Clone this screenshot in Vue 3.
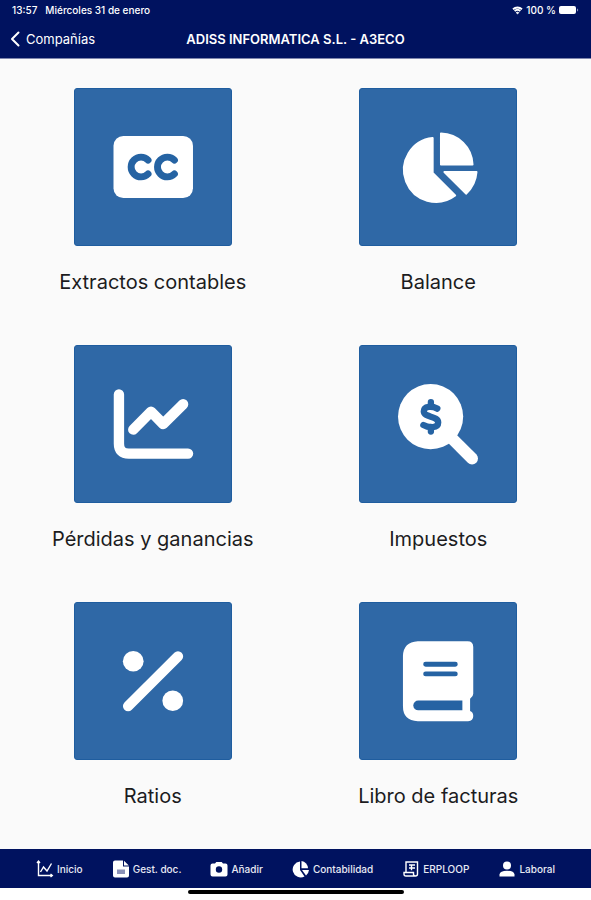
<template>
  <div class="app-screen">
    <header class="app-header">
      <div class="status-bar">
        <div class="status-group">
          <span>13:57</span>
          <span>Miércoles 31 de enero</span>
        </div>
        <div class="status-group status-right">
          <svg class="wifi" viewBox="0 0 12 10" aria-hidden="true">
            <path d="M1 3.6C3.8 1 8.2 1 11 3.6" />
            <path d="M2.8 5.6C4.6 4 7.4 4 9.2 5.6" />
            <path d="M4.6 7.4C5.4 6.7 6.6 6.7 7.4 7.4L6 8.8Z" class="solid" />
          </svg>
          <span>100 %</span>
          <svg class="battery" viewBox="0 0 20 8" aria-hidden="true">
            <rect x="0" y="0" width="17" height="8" rx="2" />
            <path d="M18 2.5C19.6 3 19.6 5 18 5.5Z" class="tip" />
          </svg>
        </div>
      </div>

      <div class="title-bar">
        <button class="back-btn" type="button">
          <svg class="back-icon" viewBox="0 0 10 16" aria-hidden="true">
            <path d="M8.5 1.5L2 8L8.5 14.5" />
          </svg>
          <span>Compañías</span>
        </button>
        <h1 class="title">ADISS INFORMATICA S.L. - A3ECO</h1>
      </div>
    </header>

    <main class="menu-grid">
      <button v-for="item in items" :key="item.icon" class="menu-item" type="button">
        <span class="tile">
          <svg viewBox="0 0 158 158" aria-hidden="true">
            <g v-if="item.icon === 'captions'">
              <rect class="solid" x="39" y="47.5" width="80.5" height="63" rx="10" />
              <path class="cut-line" stroke-width="7" d="M74 72A10 10 0 1 0 74 86" />
              <path class="cut-line" stroke-width="7" d="M100.7 72A10 10 0 1 0 100.7 86" />
            </g>
            <g v-else-if="item.icon === 'pie'" class="solid soft">
              <path d="M73.6 49.7V85L96.4 107.8A32.4 32.4 0 1 1 73.6 49.7Z" />
              <path d="M82 45A32.5 32.5 0 0 1 114 76.4H82Z" />
              <path d="M85.5 84H118A33 33 0 0 1 107.4 106Z" />
            </g>
            <g v-else-if="item.icon === 'chart'" class="line" stroke-width="10.5">
              <path d="M44.5 49V99Q44.5 109 54.5 109H114.5" />
              <path d="M59 84.7L77 66.5L89.3 79L109.5 59" />
            </g>
            <g v-else-if="item.icon === 'search'">
              <path class="line" stroke-width="12" d="M88 88.5L113.5 114" />
              <circle class="solid" cx="71.5" cy="71.5" r="33" />
              <g class="cut-line" stroke-width="6.4">
                <path d="M78.3 63.4C73 60.6 64.6 60.6 64.6 66.2C64.6 72.6 79.2 70.6 79.2 77.4C79.2 83.4 69.5 83 64.2 80" />
                <path d="M71.8 57V61M71.8 82V86.6" />
              </g>
            </g>
            <g v-else-if="item.icon === 'percent'">
              <circle class="solid" cx="59" cy="59" r="10.5" />
              <circle class="solid" cx="99" cy="99" r="10.5" />
              <path class="line" stroke-width="10.5" d="M104.3 54L53.8 104.4" />
            </g>
            <g v-else>
              <path
                class="solid"
                d="M58.5 38.7H109Q114.7 38.7 114.7 44.5V92Q114.7 95 111.5 97V109.5Q114.7 110.5 114.7 114.5Q114.7 119.7 109.5 119.7H58.5Q43.5 119 43.5 104.5V53.5Q44 39.5 58.5 38.7Z"
              />
              <path class="cut-line" stroke-width="5" d="M66.5 62H96.5M66.5 71.8H96.5" />
              <path class="cut" d="M59 98.7H103.7V108.7H59A5 5 0 0 1 59 98.7Z" />
            </g>
          </svg>
        </span>
        <span class="menu-label">{{ item.label }}</span>
      </button>
    </main>

    <nav class="tab-bar">
      <a v-for="tab in tabs" :key="tab.icon" class="tab" href="#">
        <svg class="tab-icon" viewBox="0 0 18 18" aria-hidden="true">
          <g v-if="tab.icon === 'home'" class="outline">
            <path d="M2.5 1.5V15.5H16" />
            <path d="M1 3L2.5 1.2L4 3M14.5 14L16.3 15.5L14.5 17" />
            <path d="M4.5 12L7.5 7L11 11L15.5 3.5" />
          </g>
          <g v-else-if="tab.icon === 'doc'">
            <path d="M3 0.5H11V6.5H17V15.5Q17 17.5 15 17.5H3Q1 17.5 1 15.5V2.5Q1 0.5 3 0.5Z" />
            <path d="M12 0.8L16.8 5.5H12Z" />
            <rect class="muted" x="5" y="9.5" width="8" height="4.5" />
          </g>
          <g v-else-if="tab.icon === 'camera'">
            <path
              fill-rule="evenodd"
              d="M2.5 3.5H5L6.3 2H11.7L13 3.5H15.5Q17.5 3.5 17.5 5.5V14.5Q17.5 16.5 15.5 16.5H2.5Q0.5 16.5 0.5 14.5V5.5Q0.5 3.5 2.5 3.5ZM9 6.3A3.2 3.2 0 1 0 9 12.7A3.2 3.2 0 1 0 9 6.3Z"
            />
          </g>
          <g v-else-if="tab.icon === 'pie'">
            <path d="M8 1.5V10L12.5 16.5A8 8 0 1 1 8 1.5Z" />
            <path d="M9.5 1A7.5 7.5 0 0 1 16 8.3H9.5Z" />
            <path d="M10 10H17A8 8 0 0 1 14 15.5Z" />
          </g>
          <g v-else-if="tab.icon === 'receipt'" class="outline">
            <path d="M4 12.5V2H15.5V14Q15.5 16 13.5 16H4Q2 16 2 14V12.5H11.5V14Q11.5 16 13.5 16" />
            <path d="M7 5H13M7 8H13M9.5 5V10.3" />
          </g>
          <g v-else>
            <circle cx="9" cy="5.5" r="4" />
            <path d="M1.5 16.5V14.5Q2 10.8 9 10.8Q16 10.8 16.5 14.5V16.5Z" />
          </g>
        </svg>
        <span>{{ tab.label }}</span>
      </a>
    </nav>

    <div class="home-area">
      <span class="home-indicator"></span>
    </div>
  </div>
</template>

<script setup>
const items = [
  { icon: 'captions', label: 'Extractos contables' },
  { icon: 'pie', label: 'Balance' },
  { icon: 'chart', label: 'Pérdidas y ganancias' },
  { icon: 'search', label: 'Impuestos' },
  { icon: 'percent', label: 'Ratios' },
  { icon: 'book', label: 'Libro de facturas' },
]

const tabs = [
  { icon: 'home', label: 'Inicio' },
  { icon: 'doc', label: 'Gest. doc.' },
  { icon: 'camera', label: 'Añadir' },
  { icon: 'pie', label: 'Contabilidad' },
  { icon: 'receipt', label: 'ERPLOOP' },
  { icon: 'user', label: 'Laboral' },
]
</script>

<style>
body {
  margin: 0;
  background: #fafafa;
}
</style>

<style scoped>
.app-screen {
  display: flex;
  flex-direction: column;
  min-height: 100vh;
  font-family: Inter, 'Liberation Sans', sans-serif;
  background: #fafafa;
}

button {
  padding: 0;
  border: none;
  background: none;
  font-family: inherit;
  color: inherit;
  cursor: pointer;
}

/* Header */
.app-header {
  color: #fff;
  background: #00125f;
  border-bottom: 1px solid #7f86ad;
}

.status-bar {
  display: flex;
  justify-content: space-between;
  align-items: center;
  height: 20px;
  padding: 0 12px;
  font-size: 10px;
  font-weight: 500;
}

.status-group {
  display: flex;
  align-items: center;
  gap: 8px;
}

.status-right {
  gap: 3px;
}

.wifi {
  width: 11px;
  height: 9px;
  fill: none;
  stroke: #fff;
  stroke-width: 2;
}

.wifi .solid {
  fill: #fff;
  stroke-width: 1;
}

.battery {
  width: 20px;
  height: 8px;
  fill: #fff;
}

.battery .tip {
  fill: #8b92b8;
}

.title-bar {
  display: grid;
  grid-template-columns: 1fr auto 1fr;
  align-items: center;
  height: 38px;
  padding: 0 10px;
}

.back-btn {
  display: flex;
  align-items: center;
  justify-self: start;
  gap: 6px;
  font-size: 13px;
}

.back-icon {
  width: 10px;
  height: 16px;
  fill: none;
  stroke: #fff;
  stroke-width: 2;
  stroke-linecap: round;
  stroke-linejoin: round;
}

.title {
  margin: 0;
  font-size: 13px;
  font-weight: 600;
}

/* Menu */
.menu-grid {
  flex: 1;
  display: grid;
  grid-template-columns: 1fr 1fr;
  align-content: start;
  row-gap: 49px;
  padding: 29px 10px 36px;
}

.menu-item {
  display: flex;
  flex-direction: column;
  align-items: center;
  gap: 22px;
}

.tile {
  width: 158px;
  height: 158px;
  background: #2f68a6;
  border: 1px solid #1f5d9f;
  border-radius: 3px;
  box-sizing: border-box;
}

.tile svg {
  display: block;
  width: 100%;
  height: 100%;
}

.solid {
  fill: #fff;
}

.soft {
  stroke: #fff;
  stroke-width: 2;
  stroke-linejoin: round;
}

.line {
  fill: none;
  stroke: #fff;
  stroke-linecap: round;
  stroke-linejoin: round;
}

.cut {
  fill: #2563a3;
}

.cut-line {
  fill: none;
  stroke: #2563a3;
  stroke-linecap: round;
}

.menu-label {
  font-size: 20px;
  line-height: 28px;
  color: #1c1c1e;
}

/* Tabs */
.tab-bar {
  display: flex;
  align-items: center;
  justify-content: space-between;
  height: 39px;
  padding: 0 36px;
  background: #00125f;
}

.tab {
  display: flex;
  align-items: center;
  gap: 3px;
  font-size: 10px;
  font-weight: 500;
  color: #e8eaf4;
  text-decoration: none;
}

.tab-icon {
  width: 18px;
  height: 18px;
  fill: #fff;
}

.outline {
  fill: none;
  stroke: #fff;
  stroke-width: 1.4;
}

.muted {
  fill: #8b92b8;
}

.home-area {
  display: flex;
  justify-content: center;
  height: 10px;
  padding-top: 2px;
  background: #fff;
}

.home-indicator {
  width: 216px;
  height: 4px;
  background: #000;
  border-radius: 2px;
}
</style>
